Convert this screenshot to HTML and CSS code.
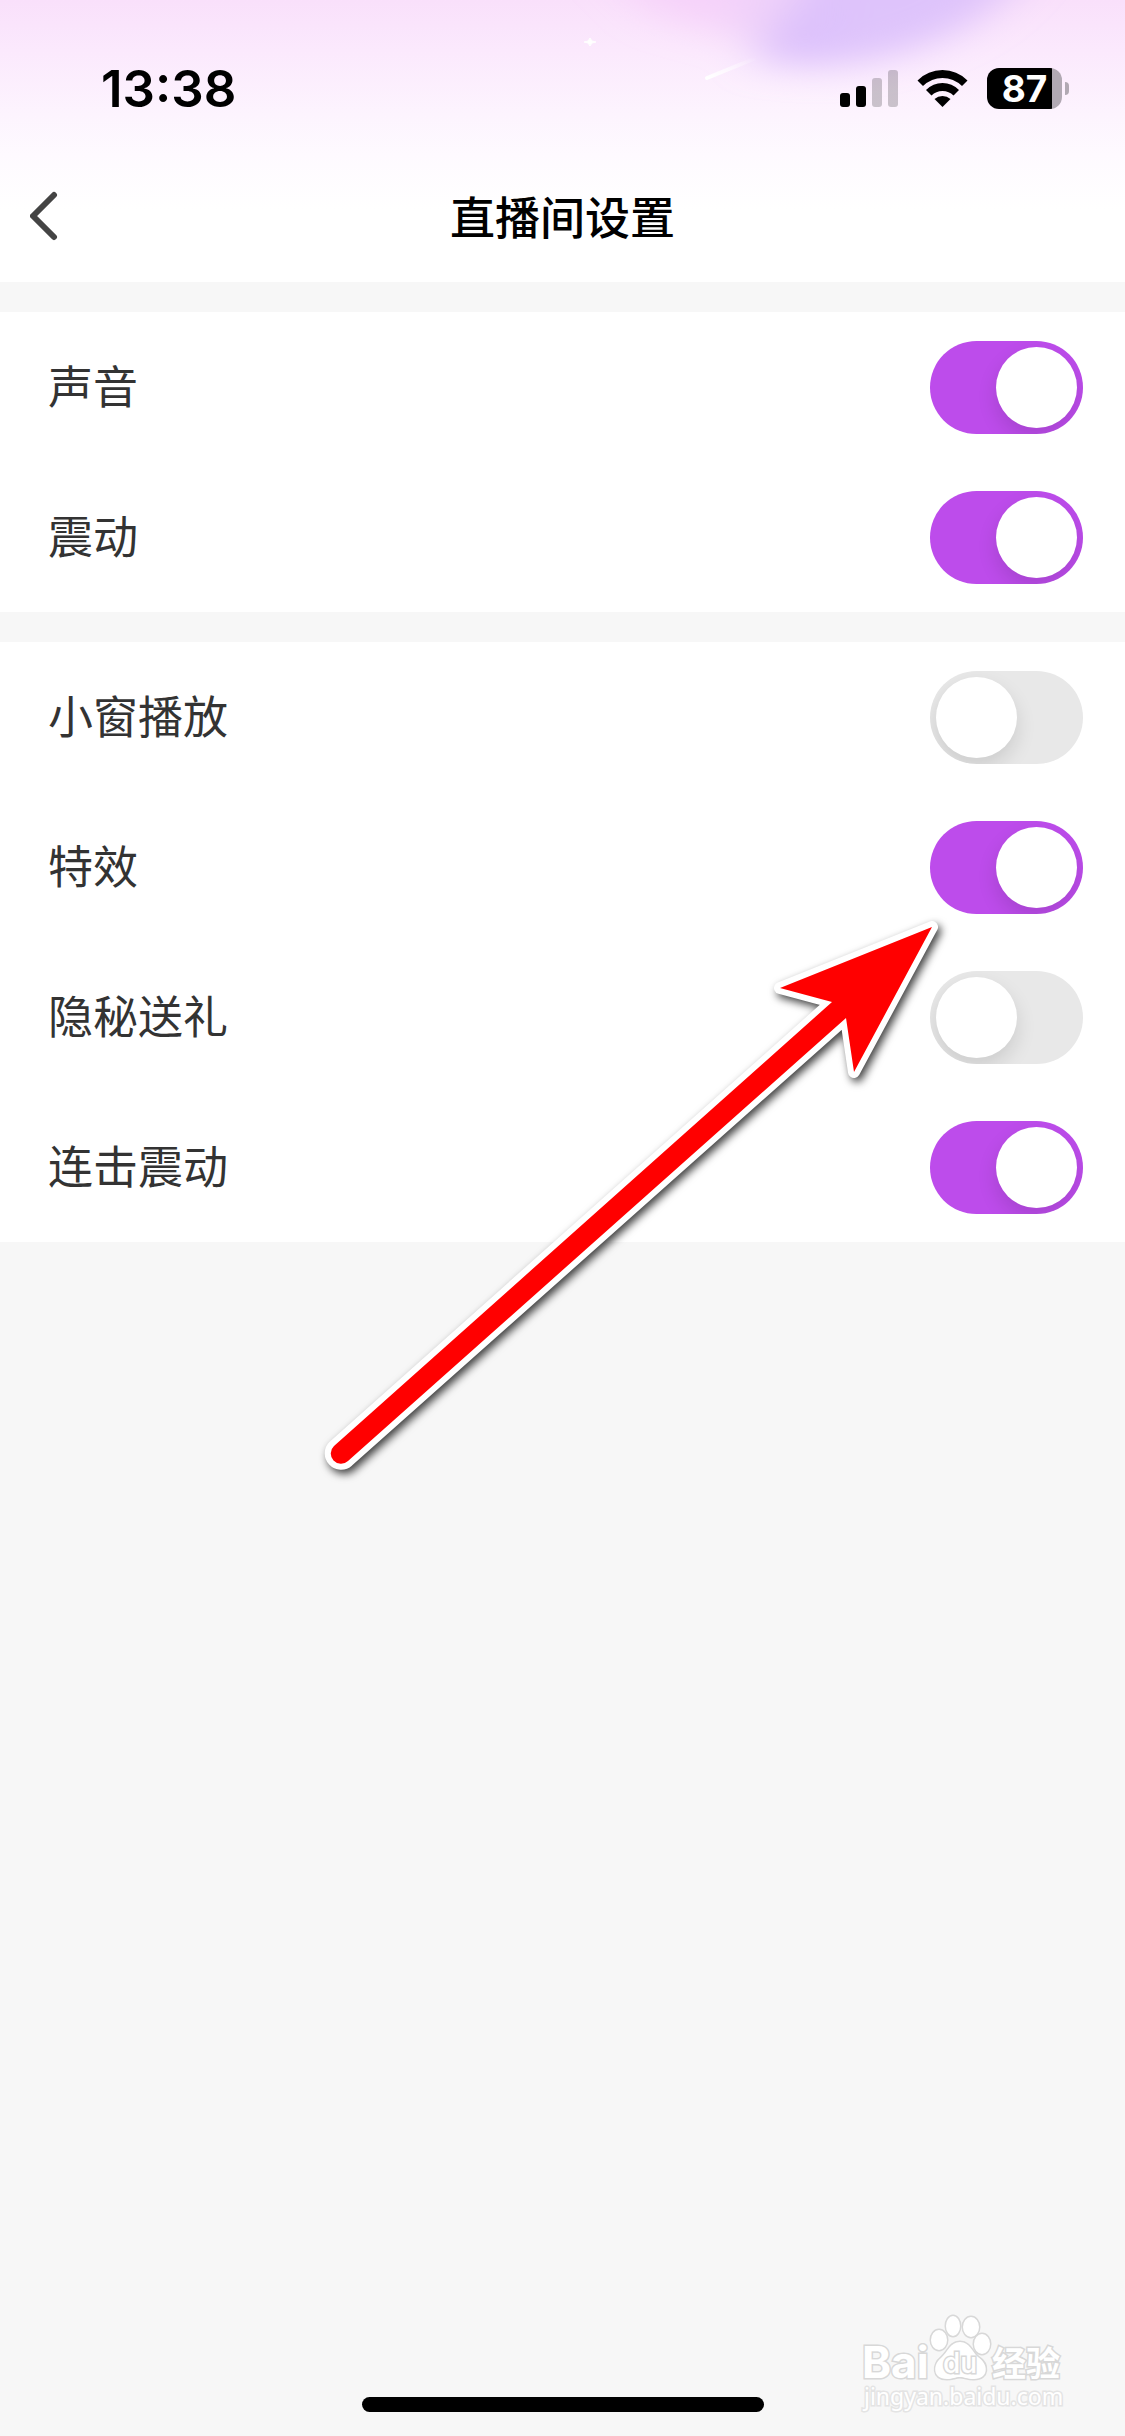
FILE: index.html
```html
<!DOCTYPE html>
<html lang="zh-CN">
<head>
    <meta charset="UTF-8">
    <meta name="viewport" content="width=device-width, initial-scale=1.0">
    <title>直播间设置</title>
    <link rel="stylesheet" href="styles.css">
</head>
<body>
    <header class="header">
        <svg class="header-glow" width="625" height="282" viewBox="0 0 625 282" aria-hidden="true">
            <defs>
                <filter id="soft" x="-50%" y="-100%" width="200%" height="300%">
                    <feGaussianBlur stdDeviation="22 16"/>
                </filter>
                <linearGradient id="meteor" x1="0" y1="1" x2="1" y2="0">
                    <stop offset="0" stop-color="#fff"/>
                    <stop offset="1" stop-color="#fff" stop-opacity="0"/>
                </linearGradient>
            </defs>
            <g filter="url(#soft)">
                <path d="M90 -50H340L300 50Q200 30 150 12Z" fill="#f5cdfa" fill-opacity="0.7"/>
                <path d="M250 -50H340L330 70Q270 60 230 30Z" fill="#e8d0fa" fill-opacity="0.5"/>
                <path d="M330 -50H540Q500 20 420 46Q340 76 250 60Q300 0 330 -50Z" fill="#d9befb" fill-opacity="0.85"/>
            </g>
            <path d="M207 78L256 58" stroke="url(#meteor)" stroke-width="4" stroke-linecap="round"/>
            <path d="M90 38Q91 42 96 42Q91 42 90 46Q89 42 84 42Q89 42 90 38Z" fill="#fff" stroke="#fff"/>
        </svg>

        <div class="status-bar">
            <time class="clock">13:38</time>
            <div class="status-icons">
                <svg width="58" height="37" viewBox="0 0 58 37" aria-label="信号">
                    <rect x="0" y="23" width="10" height="14" rx="3"/>
                    <rect x="16" y="16" width="10" height="21" rx="3"/>
                    <rect x="32" y="8" width="10" height="29" rx="3" fill-opacity="0.2"/>
                    <rect x="48" y="0" width="10" height="37" rx="3" fill-opacity="0.2"/>
                </svg>
                <svg width="51" height="37" viewBox="0 0 51 37" aria-label="无线网络">
                    <path d="M0.5 10.5Q11 0 25.5 0T50.5 10.5L45 16Q36.5 8 25.5 8T6 16Z"/>
                    <path d="M9 20Q16 13 25.5 13T42 20L36.5 25.5Q32 21 25.5 21T14.5 25.5Z"/>
                    <path d="M17.5 29Q21 26 25.5 26T33.5 29L25.5 37Z"/>
                </svg>
                <div class="battery">87</div>
            </div>
        </div>

        <div class="nav-bar">
            <button class="back" type="button" aria-label="返回">
                <svg width="30" height="50" viewBox="0 0 30 50">
                    <path d="M24 4L3 25L24 46" fill="none" stroke="#444" stroke-width="6" stroke-linecap="round" stroke-linejoin="round"/>
                </svg>
            </button>
            <h1 class="title">直播间设置</h1>
        </div>
    </header>

    <main class="settings">
        <section class="group">
            <div class="row">
                <label for="sound">声音</label>
                <input class="switch" type="checkbox" id="sound" checked>
            </div>
            <div class="row">
                <label for="vibrate">震动</label>
                <input class="switch" type="checkbox" id="vibrate" checked>
            </div>
        </section>

        <section class="group">
            <div class="row">
                <label for="mini-window">小窗播放</label>
                <input class="switch" type="checkbox" id="mini-window">
            </div>
            <div class="row">
                <label for="effects">特效</label>
                <input class="switch" type="checkbox" id="effects" checked>
            </div>
            <div class="row">
                <label for="secret-gift">隐秘送礼</label>
                <input class="switch" type="checkbox" id="secret-gift">
            </div>
            <div class="row">
                <label for="combo-vibrate">连击震动</label>
                <input class="switch" type="checkbox" id="combo-vibrate" checked>
            </div>
        </section>
    </main>

    <!-- Arrow pointing at the effects switch -->
    <svg class="pointer" width="640" height="570" viewBox="0 0 640 570" aria-hidden="true">
        <path d="M622 17L470 78L522 92L24 536A10 10 0 0 0 38 551L536 108L544 162Z" fill="#f00" stroke="#fff" stroke-width="12" stroke-linejoin="round" paint-order="stroke"/>
    </svg>

    <footer class="footer">
        <div class="home-indicator"></div>
        <svg class="watermark" width="210" height="110" viewBox="0 0 210 110" aria-label="Baidu经验">
            <g class="mark">
                <text class="brand" x="0" y="72">Bai</text>
                <ellipse cx="77" cy="34" rx="8" ry="10"/>
                <ellipse cx="91" cy="20" rx="7" ry="10"/>
                <ellipse cx="109" cy="21" rx="8" ry="10"/>
                <ellipse cx="120" cy="38" rx="8" ry="10"/>
                <path d="M98 36C108 36 110 46 116 51C127 58 127 73 112 73C104 73 103 71 98 71C93 71 91 73 85 73C70 73 71 58 79 52C86 46 88 36 98 36Z"/>
                <text class="du" x="81" y="67">du</text>
                <text class="brand-cn" x="130" y="70">经验</text>
                <text class="site" x="2" y="99">jingyan.baidu.com</text>
            </g>
        </svg>
    </footer>
</body>
</html>
```
FILE: styles.css
```css
* {
    box-sizing: border-box;
}
body {
    position: relative;
    display: flex;
    flex-direction: column;
    min-height: 100vh;
    margin: 0;
    background: #f7f7f7;
    color: #333;
    font-family: Inter, "Noto Sans CJK SC", sans-serif;
    font-size: 45px;
}

/* Header */
.header {
    position: relative;
    background: linear-gradient(#f9e0fb 0, #fbe9fd 50px, #fdf4fe 115px, #fefaff 155px, #fff 210px);
}
.header-glow {
    position: absolute;
    top: 0;
    right: 0;
}
.status-bar {
    position: relative;
    display: flex;
    align-items: center;
    justify-content: space-between;
    height: 132px;
    padding: 45px 63px 0 101px;
    color: #000;
}
.clock {
    font-size: 51px;
    font-weight: 600;
}
.status-icons {
    display: flex;
    align-items: center;
    gap: 19px;
}
.battery {
    position: relative;
    width: 75px;
    height: 41px;
    border-radius: 12px;
    background: linear-gradient(90deg, #000 65px, #b1a9b3 65px);
    color: #fff;
    font-family: Inter, sans-serif;
    font-size: 37px;
    font-weight: 700;
    line-height: 41px;
    text-align: center;
}
.battery::after {
    content: "";
    position: absolute;
    top: 14px;
    right: -7px;
    width: 4px;
    height: 13px;
    border-radius: 0 4px 4px 0;
    background: #b1a9b3;
}
.nav-bar {
    position: relative;
    display: grid;
    grid-template-columns: 90px 1fr 90px;
    align-items: center;
    height: 150px;
    padding-top: 18px;
}
.back {
    display: flex;
    padding: 20px 30px;
    border: none;
    background: none;
    cursor: pointer;
}
.title {
    margin: 0;
    padding-top: 6px;
    color: #000;
    font-size: 45px;
    font-weight: 500;
    line-height: 60px;
    text-align: center;
}

/* Setting rows */
.settings {
    display: flex;
    flex-direction: column;
    gap: 30px;
    padding-top: 30px;
}
.group {
    background: #fff;
}
.row {
    display: flex;
    align-items: center;
    justify-content: space-between;
    height: 150px;
    padding: 0 42px 0 48px;
}
.row label {
    padding-bottom: 6px;
}
.switch {
    appearance: none;
    width: 153px;
    height: 93px;
    margin: 0;
    padding: 6px;
    border-radius: 47px;
    background: #e8e8e8;
    overflow: hidden;
    cursor: pointer;
}
.switch::before {
    content: "";
    display: block;
    width: 81px;
    height: 81px;
    border-radius: 50%;
    background: #fff;
    box-shadow: 0 9px 20px rgba(0, 0, 0, 0.12);
}
.switch:checked {
    background: #bd4ceb;
}
.switch:checked::before {
    margin-left: auto;
}

.pointer {
    position: absolute;
    top: 910px;
    right: 175px;
    filter: drop-shadow(3px 4px 4px rgba(0, 0, 0, 0.75));
    pointer-events: none;
}

/* Footer */
.footer {
    position: relative;
    margin-top: auto;
    padding-bottom: 24px;
}
.home-indicator {
    width: 402px;
    height: 15px;
    margin: 0 auto;
    border-radius: 8px;
    background: #000;
}
.watermark {
    position: absolute;
    right: 53px;
    bottom: 20px;
    overflow: visible;
}
.mark {
    fill: #fff;
    stroke: #d8d8d8;
    stroke-width: 3px;
    paint-order: stroke;
}
.brand {
    font-family: Inter, sans-serif;
    font-size: 44px;
    font-weight: 700;
}
.brand-cn {
    font-family: "Noto Sans CJK SC", sans-serif;
    font-size: 34px;
    font-weight: 700;
}
.du {
    font-family: Inter, sans-serif;
    font-size: 28px;
    font-weight: 500;
}
.site {
    font-family: "Noto Sans", sans-serif;
    font-size: 23px;
    stroke: #e4e4e4;
}
```
